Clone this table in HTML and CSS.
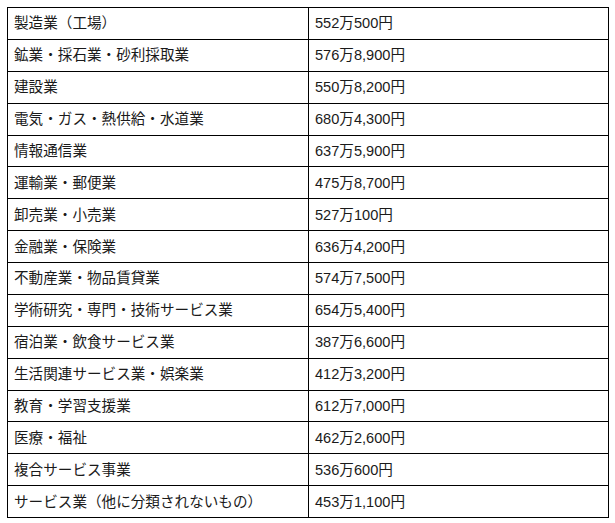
FILE: index.html
```html
<!DOCTYPE html>
<html lang="ja">
<head>
<meta charset="utf-8">
<link rel="stylesheet" href="styles.css">
</head>
<body>
<table class="wage-table">
<colgroup><col class="col-name"><col class="col-val"></colgroup>
<tbody>
<tr><td>製造業（工場）</td><td>552万500円</td></tr>
<tr><td>鉱業・採石業・砂利採取業</td><td>576万8,900円</td></tr>
<tr><td>建設業</td><td>550万8,200円</td></tr>
<tr><td>電気・ガス・熱供給・水道業</td><td>680万4,300円</td></tr>
<tr><td>情報通信業</td><td>637万5,900円</td></tr>
<tr><td>運輸業・郵便業</td><td>475万8,700円</td></tr>
<tr><td>卸売業・小売業</td><td>527万100円</td></tr>
<tr><td>金融業・保険業</td><td>636万4,200円</td></tr>
<tr><td>不動産業・物品賃貸業</td><td>574万7,500円</td></tr>
<tr><td>学術研究・専門・技術サービス業</td><td>654万5,400円</td></tr>
<tr><td>宿泊業・飲食サービス業</td><td>387万6,600円</td></tr>
<tr><td>生活関連サービス業・娯楽業</td><td>412万3,200円</td></tr>
<tr><td>教育・学習支援業</td><td>612万7,000円</td></tr>
<tr><td>医療・福祉</td><td>462万2,600円</td></tr>
<tr><td>複合サービス事業</td><td>536万600円</td></tr>
<tr><td>サービス業（他に分類されないもの）</td><td>453万1,100円</td></tr>
</tbody>
</table>
</body>
</html>
```
FILE: styles.css
```css
html, body {
  margin: 0;
  padding: 0;
  background: #fff;
}
body {
  padding: 7px;
  font-family: "Liberation Sans", "Noto Sans CJK JP", sans-serif;
  font-size: 14.6px;
  color: #1a1a1a;
}
.wage-table {
  width: 601px;
  border-collapse: collapse;
  table-layout: fixed;
}
.col-name { width: 301px; }
.col-val { width: 300px; }
.wage-table tr {
  height: 31.875px;
}
.wage-table td {
  border: 1px solid #000;
  padding: 0 6px;
  vertical-align: middle;
  line-height: 18px;
  white-space: nowrap;
}
```
